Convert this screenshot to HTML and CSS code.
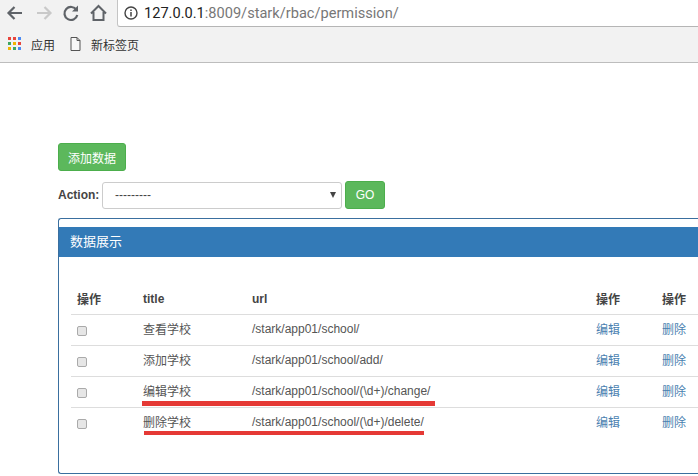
FILE: index.html
```html
<!DOCTYPE html>
<html lang="zh">
<head>
<meta charset="utf-8">
<title>permission</title>
<link rel="stylesheet" href="styles.css">
</head>
<body>
<header class="chrome">
  <div class="navbar">
    <svg class="nav-icons" width="112" height="26" viewBox="0 0 112 26">
      <path d="M22 13H9M14.500 7 8.500 13l6 6" fill="none" stroke="#5f6368" stroke-width="2.200"/>
      <path d="M37 13h13M44.500 7l6 6-6 6" fill="none" stroke="#c9c9c9" stroke-width="2.200"/>
      <path d="M76.500 10a6.500 6.500 0 1 0 .8 5" fill="none" stroke="#5f6368" stroke-width="2.200"/>
      <path d="M78 5.500v6h-6z" fill="#5f6368"/>
      <path d="M91 13.500 98.500 6l7.500 7.500M93.500 12v8h10v-8" fill="none" stroke="#5f6368" stroke-width="2"/>
    </svg>
    <div class="omnibox">
      <svg class="info" width="14" height="14" viewBox="0 0 14 14">
        <circle cx="7" cy="7" r="6" fill="none" stroke="#444" stroke-width="1.400"/>
        <path d="M7 6v4.500M7 3.500v1.500" stroke="#444" stroke-width="1.500"/>
      </svg>
      <span class="host">127.0.0.1</span><span class="path">:8009/stark/rbac/permission/</span>
    </div>
  </div>
  <div class="bookmarks">
    <svg class="apps" width="14" height="14" viewBox="0 0 14 14">
      <rect x="0" y="0" width="3" height="3" fill="#e8453c"/><rect x="5" y="0" width="3" height="3" fill="#e8453c"/><rect x="10" y="0" width="3" height="3" fill="#4a8af4"/>
      <rect x="0" y="5" width="3" height="3" fill="#3ea662"/><rect x="5" y="5" width="3" height="3" fill="#f4b400"/><rect x="10" y="5" width="3" height="3" fill="#e8453c"/>
      <rect x="0" y="10" width="3" height="3" fill="#f4b400"/><rect x="5" y="10" width="3" height="3" fill="#3ea662"/><rect x="10" y="10" width="3" height="3" fill="#4a8af4"/>
    </svg>
    <span class="mark-apps">应用</span>
    <svg class="doc" width="11" height="14" viewBox="0 0 11 14">
      <path d="M1 .5h6l3 3v10H1zM7 .5v3h3" fill="#f8f8f8" stroke="#555"/>
    </svg>
    <span>新标签页</span>
  </div>
</header>
<main class="content">
  <button class="btn add">添加数据</button>
  <form class="action-row">
    <label>Action:</label>
    <div class="select"><span>---------</span><i class="caret"></i></div>
    <button class="btn go" type="button">GO</button>
  </form>
  <section class="panel">
    <h3 class="panel-heading">数据展示</h3>
    <div class="panel-body">
      <table>
        <colgroup><col class="c1"><col class="c2"><col class="c3"><col class="c4"><col class="c5"></colgroup>
        <thead><tr><th>操作</th><th>title</th><th>url</th><th>操作</th><th>操作</th></tr></thead>
        <tbody>
          <tr><td><input type="checkbox"></td><td>查看学校</td><td>/stark/app01/school/</td><td><a>编辑</a></td><td><a>删除</a></td></tr>
          <tr><td><input type="checkbox"></td><td>添加学校</td><td>/stark/app01/school/add/</td><td><a>编辑</a></td><td><a>删除</a></td></tr>
          <tr><td><input type="checkbox"></td><td>编辑学校</td><td>/stark/app01/school/(\d+)/change/</td><td><a>编辑</a></td><td><a>删除</a></td></tr>
          <tr><td><input type="checkbox"></td><td>删除学校</td><td>/stark/app01/school/(\d+)/delete/</td><td><a>编辑</a></td><td><a>删除</a></td></tr>
        </tbody>
      </table>
    </div>
  </section>
</main>
<div class="mark mark-1"></div>
<div class="mark mark-2"></div>
</body>
</html>
```
FILE: styles.css
```css
* { box-sizing: border-box; }
html, body { margin: 0; height: 476px; overflow: hidden; background: #fff; }
body { font-family: "Liberation Sans", "Noto Sans CJK SC", sans-serif; font-size: 12px; color: #333; position: relative; }
.chrome { height: 63px; background: #f2f2f2; border-bottom: 1px solid #bdbdbd; }
.navbar { height: 28px; display: flex; align-items: flex-start; }
.nav-icons { flex: none; width: 112px; height: 26px; }
.omnibox { flex: 1; margin-left: 5px; height: 27px; background: #fff; border-left: 1px solid #c4c4c4; border-bottom: 1px solid #b5b5b5; border-bottom-left-radius: 3px; display: flex; align-items: center; padding: 0 0 1px 6px; font-size: 14.600px; font-family: "Roboto", "Liberation Sans", sans-serif; }
.info { margin-right: 6px; flex: none; }
.host { color: #222; }
.path { color: #777; }
.bookmarks { height: 34px; display: flex; align-items: center; padding: 0 0 2px 8px; color: #333; font-size: 12px; }
.apps { flex: none; }
.mark-apps { margin-left: 9px; }
.doc { margin-left: 15px; margin-right: 10px; flex: none; }
.content { padding: 80px 0 0 58px; }
.btn { background: #5cb85c; border: 1px solid #4cae4c; border-radius: 3px; color: #fff; font: inherit; padding: 0; display: block; }
.add { width: 68px; height: 28px; }
.action-row { display: flex; align-items: center; margin-top: 10px; height: 28px; }
.action-row label { font-weight: bold; width: 44px; flex: none; color: #444; }
.select { width: 240px; height: 27px; border: 1px solid #ccc; border-radius: 3px; background: #fff; display: flex; align-items: center; justify-content: space-between; padding: 0 5px 0 12px; color: #444; }
.caret { width: 0; height: 0; border-left: 3.500px solid transparent; border-right: 3.500px solid transparent; border-top: 6px solid #444; }
.go { width: 40px; height: 28px; margin-left: 3px; }
.panel { margin-top: 9px; width: 640px; height: 256px; border: 1px solid #3a6f9f; border-right: 0; border-radius: 3px 0 0 3px; padding-top: 8px; overflow: hidden; }
.panel-heading { margin: 0; height: 30px; background: #337ab7; color: #fff; font-size: 13px; font-weight: normal; line-height: 30px; padding-left: 11px; }
.panel-body { padding: 26px 0 0 12px; }
table { border-collapse: collapse; table-layout: fixed; width: 627px; }
.c1 { width: 66px; } .c2 { width: 109px; } .c3 { width: 344px; } .c4 { width: 66px; } .c5 { width: 42px; }
th { text-align: left; height: 31px; padding: 1px 6px 0; font-weight: bold; border-bottom: 1px solid #ddd; color: #444; }
td { height: 31px; padding: 0 6px 2px; border-bottom: 1px solid #ddd; color: #555; }
tbody tr:last-child td { border-bottom: 0; }
td a { color: #4a7fb0; }
input[type=checkbox] { appearance: none; display: block; margin: 4px 0 0; width: 10px; height: 10px; background: #e6e6e6; border: 1px solid #aaa; border-radius: 2px; }
.mark { position: absolute; background: #e53935; }
.mark-1 { left: 142px; top: 401px; width: 293px; height: 5px; }
.mark-2 { left: 144px; top: 431px; width: 280px; height: 4px; }
```
